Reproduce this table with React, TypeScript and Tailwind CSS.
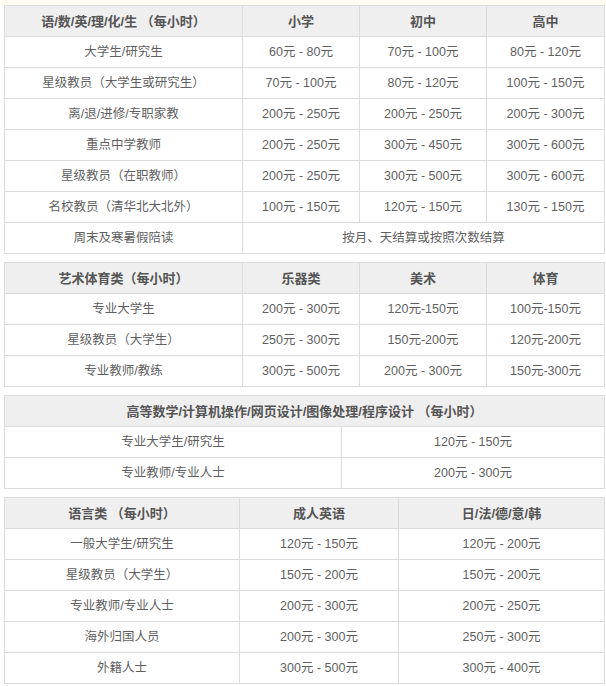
import React from "react"

type Row = string[]

const font = { fontFamily: '"Liberation Sans", "Noto Sans CJK SC", sans-serif' }

function PriceTable({
  widths,
  head,
  rows,
  headSpan,
}: {
  widths: number[]
  head: string[]
  rows: Row[]
  headSpan?: boolean
}) {
  return (
    <table className="ml-[4px] w-[600px] table-fixed border-collapse text-[12.5px] text-[#5f5f5f]">
      <colgroup>
        {widths.map((w, i) => (
          <col key={i} style={{ width: w }} />
        ))}
      </colgroup>
      <thead>
        <tr className="h-[31px] bg-[#efefef]">
          {head.map((h, i) => (
            <th
              key={i}
              colSpan={headSpan ? widths.length : 1}
              className="border border-[#dcdcdc] p-0 pt-px text-center text-[13px] font-bold text-[#555]"
            >
              {h}
            </th>
          ))}
        </tr>
      </thead>
      <tbody>
        {rows.map((r, i) => (
          <tr key={i} className="h-[31px] bg-white">
            {r.map((c, j) => (
              <td
                key={j}
                colSpan={r.length === 2 && widths.length === 4 && j === 1 ? 3 : 1}
                className="border border-[#dcdcdc] p-0 pt-px text-center"
              >
                {c}
              </td>
            ))}
          </tr>
        ))}
      </tbody>
    </table>
  )
}

export default function App() {
  return (
    <div className="min-h-screen w-[606px] bg-white" style={font}>
      <div className="h-[5px] bg-[#fffdf2]" />
      <div className="flex flex-col gap-[8px]">
        <PriceTable
          widths={[238, 117, 127, 118]}
          head={["语/数/英/理/化/生 （每小时）", "小学", "初中", "高中"]}
          rows={[
            ["大学生/研究生", "60元 - 80元", "70元 - 100元", "80元 - 120元"],
            ["星级教员（大学生或研究生）", "70元 - 100元", "80元 - 120元", "100元 - 150元"],
            ["离/退/进修/专职家教", "200元 - 250元", "200元 - 250元", "200元 - 300元"],
            ["重点中学教师", "200元 - 250元", "300元 - 450元", "300元 - 600元"],
            ["星级教员（在职教师）", "200元 - 250元", "300元 - 500元", "300元 - 600元"],
            ["名校教员（清华北大北外）", "100元 - 150元", "120元 - 150元", "130元 - 150元"],
            ["周末及寒暑假陪读", "按月、天结算或按照次数结算"],
          ]}
        />
        <PriceTable
          widths={[238, 117, 127, 118]}
          head={["艺术体育类（每小时）", "乐器类", "美术", "体育"]}
          rows={[
            ["专业大学生", "200元 - 300元", "120元-150元", "100元-150元"],
            ["星级教员（大学生）", "250元 - 300元", "150元-200元", "120元-200元"],
            ["专业教师/教练", "300元 - 500元", "200元 - 300元", "150元-300元"],
          ]}
        />
        <PriceTable
          widths={[337, 263]}
          headSpan
          head={["高等数学/计算机操作/网页设计/图像处理/程序设计 （每小时）"]}
          rows={[
            ["专业大学生/研究生", "120元 - 150元"],
            ["专业教师/专业人士", "200元 - 300元"],
          ]}
        />
        <PriceTable
          widths={[235, 159, 206]}
          head={["语言类 （每小时）", "成人英语", "日/法/德/意/韩"]}
          rows={[
            ["一般大学生/研究生", "120元 - 150元", "120元 - 200元"],
            ["星级教员（大学生）", "150元 - 200元", "150元 - 200元"],
            ["专业教师/专业人士", "200元 - 300元", "200元 - 250元"],
            ["海外归国人员", "200元 - 300元", "250元 - 300元"],
            ["外籍人士", "300元 - 500元", "300元 - 400元"],
          ]}
        />
      </div>
    </div>
  )
}
